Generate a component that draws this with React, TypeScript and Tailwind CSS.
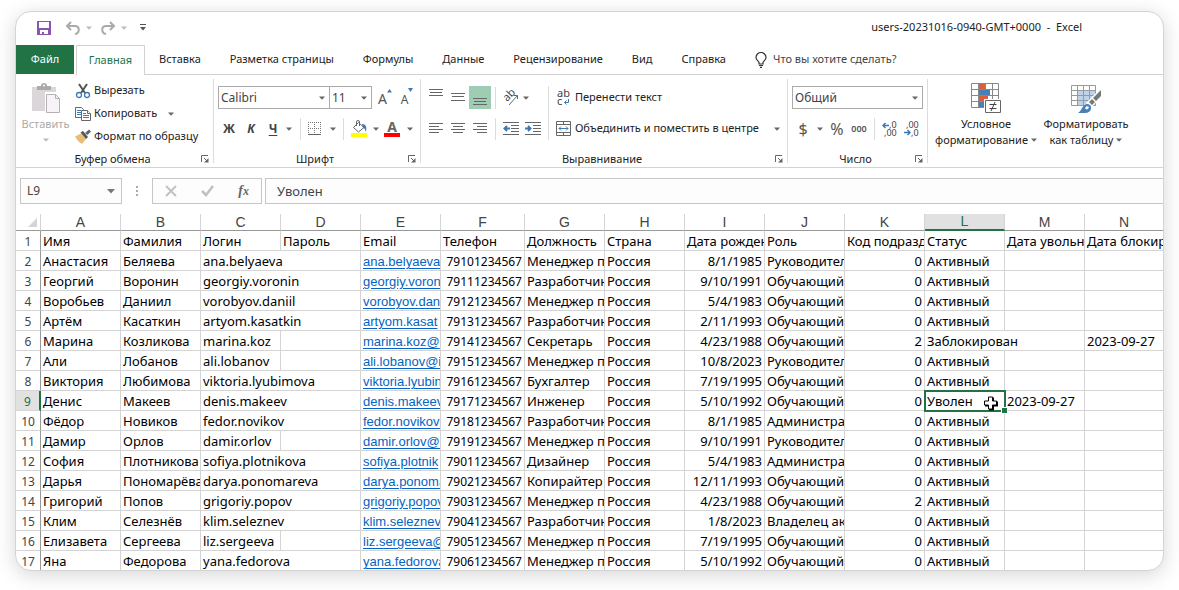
import { Fragment, type ReactNode } from "react";

const tabs = ["Вставка", "Разметка страницы", "Формулы", "Данные", "Рецензирование", "Вид", "Справка"];

const columns = ["A", "B", "C", "D", "E", "F", "G", "H", "I", "J", "K", "L", "M", "N"];

const headings = [
  "Имя", "Фамилия", "Логин", "Пароль", "Email", "Телефон", "Должность", "Страна",
  "Дата рожден", "Роль", "Код подразд", "Статус", "Дата увольн", "Дата блокир",
];

type User = {
  first: string;
  last: string;
  login: string;
  spill?: boolean;
  email: string;
  phone: string;
  job: string;
  born: string;
  role: string;
  unit: string;
  status: string;
  dismissed?: string;
  blocked?: string;
};

const manager = "Менеджер п";
const developer = "Разработчик";
const student = "Обучающий";
const head = "Руководител";
const admin = "Администра";

const users: User[] = [
  { first: "Анастасия", last: "Беляева", login: "ana.belyaeva", spill: true, email: "ana.belyaeva@", phone: "79101234567", job: manager, born: "8/1/1985", role: head, unit: "0", status: "Активный" },
  { first: "Георгий", last: "Воронин", login: "georgiy.voronin", spill: true, email: "georgiy.voroni", phone: "79111234567", job: developer, born: "9/10/1991", role: student, unit: "0", status: "Активный" },
  { first: "Воробьев", last: "Даниил", login: "vorobyov.daniil", spill: true, email: "vorobyov.dani", phone: "79121234567", job: manager, born: "5/4/1983", role: student, unit: "0", status: "Активный" },
  { first: "Артём", last: "Касаткин", login: "artyom.kasatkin", spill: true, email: "artyom.kasat", phone: "79131234567", job: developer, born: "2/11/1993", role: student, unit: "0", status: "Активный" },
  { first: "Марина", last: "Козликова", login: "marina.koz", email: "marina.koz@", phone: "79141234567", job: "Секретарь", born: "4/23/1988", role: student, unit: "2", status: "Заблокирован", blocked: "2023-09-27" },
  { first: "Али", last: "Лобанов", login: "ali.lobanov", email: "ali.lobanov@i", phone: "79151234567", job: manager, born: "10/8/2023", role: head, unit: "0", status: "Активный" },
  { first: "Виктория", last: "Любимова", login: "viktoria.lyubimova", spill: true, email: "viktoria.lyubin", phone: "79161234567", job: "Бухгалтер", born: "7/19/1995", role: student, unit: "0", status: "Активный" },
  { first: "Денис", last: "Макеев", login: "denis.makeev", spill: true, email: "denis.makeev", phone: "79171234567", job: "Инженер", born: "5/10/1992", role: student, unit: "0", status: "Уволен", dismissed: "2023-09-27" },
  { first: "Фёдор", last: "Новиков", login: "fedor.novikov", spill: true, email: "fedor.novikov@", phone: "79181234567", job: developer, born: "8/1/1985", role: admin, unit: "0", status: "Активный" },
  { first: "Дамир", last: "Орлов", login: "damir.orlov", email: "damir.orlov@i", phone: "79191234567", job: manager, born: "9/10/1991", role: head, unit: "0", status: "Активный" },
  { first: "София", last: "Плотникова", login: "sofiya.plotnikova", spill: true, email: "sofiya.plotnik", phone: "79011234567", job: "Дизайнер", born: "5/4/1983", role: admin, unit: "0", status: "Активный" },
  { first: "Дарья", last: "Пономарёва", login: "darya.ponomareva", spill: true, email: "darya.ponoma", phone: "79021234567", job: "Копирайтер", born: "12/11/1993", role: student, unit: "0", status: "Активный" },
  { first: "Григорий", last: "Попов", login: "grigoriy.popov", spill: true, email: "grigoriy.popov", phone: "79031234567", job: manager, born: "4/23/1988", role: student, unit: "2", status: "Активный" },
  { first: "Клим", last: "Селезнёв", login: "klim.seleznev", spill: true, email: "klim.seleznev", phone: "79041234567", job: developer, born: "1/8/2023", role: "Владелец ак", unit: "0", status: "Активный" },
  { first: "Елизавета", last: "Сергеева", login: "liz.sergeeva", email: "liz.sergeeva@", phone: "79051234567", job: manager, born: "7/19/1995", role: student, unit: "0", status: "Активный" },
  { first: "Яна", last: "Федорова", login: "yana.fedorova", spill: true, email: "yana.fedorova", phone: "79061234567", job: manager, born: "5/10/1992", role: student, unit: "0", status: "Активный" },
];

function Caret({ className = "text-[#666]" }: { className?: string }) {
  return (
    <svg className={`shrink-0 ${className}`} width="6" height="4" viewBox="0 0 6 4" fill="currentColor" aria-hidden="true">
      <path d="M0 .5h6L3 3.7z" />
    </svg>
  );
}

function Launcher({ label }: { label: string }) {
  return (
    <button type="button" aria-label={label} className="justify-self-end">
      <svg width="8" height="8" viewBox="0 0 8 8" fill="none" stroke="#666" aria-hidden="true">
        <path d="M.5 7V.5H7M3 3l3 3" />
        <path d="M7.500 3v4.500H3z" fill="#666" stroke="none" />
      </svg>
    </button>
  );
}

function Group({ title, className, children }: { title: string; className: string; children: ReactNode }) {
  return (
    <section aria-label={title} className={`flex shrink-0 flex-col border-r border-[#dcdcdc] ${className}`}>
      <div className="h-[72px] shrink-0">{children}</div>
      <div className="grid shrink-0 grid-cols-[12px_1fr_12px] items-center pr-1">
        <span />
        <h2 className="text-center leading-4">{title}</h2>
        <Launcher label={title} />
      </div>
    </section>
  );
}

function Tool({ label, className = "w-[22px]", children }: { label: string; className?: string; children: ReactNode }) {
  return (
    <button type="button" aria-label={label} className={`flex h-[23px] shrink-0 items-center justify-center ${className}`}>
      {children}
    </button>
  );
}

function Combo({ label, value, className }: { label: string; value: string; className: string }) {
  return (
    <div className={`relative flex h-[23px] items-center border border-[#ababab] bg-white ${className}`}>
      <select aria-label={label} defaultValue={value} className="h-full w-full appearance-none bg-transparent pl-[2px] text-xs text-[#444] outline-none">
        <option>{value}</option>
      </select>
      <Caret className="pointer-events-none absolute right-1 text-[#666]" />
    </div>
  );
}

function Lines({ rows }: { rows: [number, number, number][] }) {
  return (
    <svg width="14" height="23" viewBox="0 0 14 23" fill="#666" aria-hidden="true">
      {rows.map(([x, y, w]) => (
        <rect key={y} x={x} y={y} width={w} height="1" />
      ))}
    </svg>
  );
}

function Separator() {
  return <span className="h-[22px] w-px shrink-0 bg-[#dcdcdc]" />;
}

function PasteIcon() {
  return (
    <svg width="28" height="31" viewBox="0 0 28 31" aria-hidden="true">
      <path d="M0 4h24v24H0z" fill="#dbd6da" />
      <path d="M5 7V3h4a3 3 0 0 1 6 0h4v4z" fill="#aaa" />
      <circle cx="12" cy="2.500" r="1" fill="#fff" />
      <path d="M13 9h12l4 4v18H13z" fill="#fff" />
      <path d="M14.500 11.500h9l4 4v14h-13z" fill="#f7f3f8" stroke="#b5b1b5" />
      <path d="M23.500 11.500v4h4" fill="none" stroke="#b5b1b5" />
    </svg>
  );
}

function ScissorsIcon() {
  return (
    <svg width="16" height="16" viewBox="0 0 16 16" fill="none" aria-hidden="true">
      <path d="M4 1l6 9M12 1l-6 9" stroke="#555" strokeWidth="2" />
      <circle cx="4" cy="12" r="2.500" stroke="#3f79b5" strokeWidth="1.300" />
      <circle cx="12" cy="12" r="2.500" stroke="#3f79b5" strokeWidth="1.300" />
    </svg>
  );
}

function CopyIcon() {
  return (
    <svg width="16" height="16" viewBox="0 0 16 16" fill="#fff" aria-hidden="true">
      <path d="M.5 1.500h6l2 2v8h-8z" stroke="#666" />
      <path d="M2 4.500h4M2 6.500h4M2 8.500h4" stroke="#3f79b5" />
      <path d="M6.500 4.500h6l3 3v7h-9z" stroke="#666" />
      <path d="M12.500 4.500v3h3" stroke="#666" />
      <path d="M8 7.500h3M8 9.500h6M8 11.500h6" stroke="#3f79b5" />
    </svg>
  );
}

function BrushIcon() {
  return (
    <svg width="16" height="16" viewBox="0 0 16 16" aria-hidden="true">
      <path d="M0 7.500l6-3 5 5.500-4 5-4-3z" fill="#e8bd77" />
      <path d="M5.500 3.500L8 2l5 6-2 2z" fill="#555" />
      <path d="M10 4l4-3.500 2 2L12.500 6z" fill="#666" />
    </svg>
  );
}

function BordersIcon() {
  return (
    <svg width="14" height="14" viewBox="0 0 14 14" fill="none" stroke="#777" strokeDasharray="1 1" aria-hidden="true">
      <path d="M0 .5h13M0 6.500h13M.5 0v13M6.500 0v13M12.500 0v13" />
      <path d="M0 12.500h13" strokeDasharray="none" stroke="#666" />
    </svg>
  );
}

function FillIcon() {
  return (
    <svg width="16" height="17" viewBox="0 0 16 17" aria-hidden="true">
      <path d="M2.500 7.500l5-5 5.500 5-5.500 4.500z" fill="#fff" stroke="#666" />
      <path d="M5.500 6V2a1.500 1.500 0 0 1 3 0v4" fill="none" stroke="#666" />
      <path d="M11 4c4 0 5 3 4 8-1-2-1-4-3-4z" fill="#3f79b5" />
      <path d="M0 13h16v4H0z" fill="#ff0" />
    </svg>
  );
}

function FontColorIcon() {
  return (
    <span className="flex flex-col items-center">
      <span className="h-[13px] text-sm leading-[13px] font-bold text-[#666]">A</span>
      <span className="h-1 w-4 bg-[#f00]" />
    </span>
  );
}

function GrowFont({ down = false }: { down?: boolean }) {
  return (
    <span className="flex items-start">
      <span className={down ? "pt-1 text-xs leading-4 text-[#555]" : "pt-[2px] text-sm leading-4 text-[#555]"}>A</span>
      <svg width="5" height="4" viewBox="0 0 5 4" fill="#3f79b5" aria-hidden="true">
        <path d={down ? "M0 0h5L2.500 4z" : "M0 3.500h5L2.500 0z"} />
      </svg>
    </span>
  );
}

function OrientationIcon() {
  return (
    <svg width="17" height="16" viewBox="0 0 17 16" aria-hidden="true">
      <text x="0" y="0" transform="translate(5 12) rotate(-45)" fontSize="11" fill="#444">ab</text>
      <path d="M7 15l8-9M12 5.500h3.500V9" fill="none" stroke="#666" />
    </svg>
  );
}

function IndentIcon({ right = false }: { right?: boolean }) {
  return (
    <svg width="16" height="13" viewBox="0 0 16 13" fill="none" stroke="#666" aria-hidden="true">
      <path d="M0 .5h16M8 3.500h8M8 6.500h8M8 9.500h8M0 12.500h16" />
      <path d={right ? "M0 6.500h5M3 4l2.500 2.500L3 9" : "M2 6.500h5M4 4L1.500 6.500 4 9"} stroke="#3f79b5" strokeWidth="2" />
    </svg>
  );
}

function WrapIcon() {
  return (
    <svg width="16" height="18" viewBox="0 0 16 18" fontSize="11" fill="#444" aria-hidden="true">
      <text x="1" y="8">ab</text>
      <text x="1" y="16">c</text>
      <path d="M12.500 10v3.500H8.500M10.500 11.500l-2 2 2 2" fill="none" stroke="#3f79b5" />
    </svg>
  );
}

function MergeIcon() {
  return (
    <svg width="16" height="15" viewBox="0 0 16 15" fill="none" stroke="#666" aria-hidden="true">
      <path d="M.5.5h14v14H.5zM.5 3.500h14M.5 11.500h14M7.500 0v3M7.500 12v3" />
      <path d="M3 7.500h9M5 5.500l-2 2 2 2M10 5.500l2 2-2 2" stroke="#3f79b5" />
    </svg>
  );
}

function DecimalIcon({ less = false }: { less?: boolean }) {
  return (
    <svg width="16" height="16" viewBox="0 0 16 16" fontSize="9" fill="#444" aria-hidden="true">
      <text x={less ? 2 : 7} y="7">{less ? ",00" : ",0"}</text>
      <text x={less ? 7 : 2} y="15">{less ? ",0" : ",00"}</text>
      <path d={less ? "M0 11.500h6M3.500 9L6 11.500 3.500 14" : "M1 4.500h6M3.500 2L1 4.500 3.500 7"} fill="none" stroke="#3f79b5" strokeWidth="1.500" />
    </svg>
  );
}

function ConditionalIcon() {
  return (
    <svg width="30" height="30" viewBox="0 0 30 30" aria-hidden="true">
      <path d="M.5.500h27v24H.5z" fill="#fff" />
      <path d="M8 1h6v5H8z" fill="#d8603f" />
      <path d="M8 19h5v5H8z" fill="#4a80b8" />
      <path d="M.5.500h27v24H.5zM0 6.500h28M0 12.500h28M0 18.500h28M7.500 0v25M14.500 0v25M21.500 0v25" fill="none" stroke="#888" />
      <path d="M8 7h11v5H8z" fill="#4a80b8" />
      <path d="M8 13h9v5H8z" fill="#d8603f" />
      <path d="M13 16h17v14H13z" fill="#fff" />
      <path d="M14.500 17.500h15v12h-15z" fill="#fff" stroke="#666" />
      <path d="M18.500 21.500h7M18.500 25.500h7M24 19l-4 9" fill="none" stroke="#444" />
    </svg>
  );
}

function TableIcon() {
  return (
    <svg width="30" height="30" viewBox="0 0 30 30" aria-hidden="true">
      <path d="M.5 2.500h24v20H.5z" fill="#fff" />
      <path d="M6 8h19v15H6z" fill="#bdd3ea" />
      <path d="M.5 2.500h24v20H.5zM0 7.500h25M0 12.500h25M0 17.500h25M6.500 2v21M12.500 2v21M18.500 2v21" fill="none" stroke="#999" />
      <path d="M30 5v9L20 25l-5-5z" fill="#fff" />
      <path d="M30 7v6l-5 5-3-3zM21 16l3 3-3 3-3-3z" fill="#777" />
      <path d="M7 30c4-2 4-9 10-9 5 1 4 9-3 9z" fill="#4a80b8" />
      <path d="M14 25c1-2 3-2 4-1-1 3-3 3-4 1z" fill="#fff" />
    </svg>
  );
}

function TitleBar() {
  return (
    <header className="flex h-[33px] items-center pr-[81px] pb-[2px] pl-[21px]">
      <button type="button" aria-label="Сохранить" className="mr-[14px]">
        <svg width="14" height="14" viewBox="0 0 14 14" aria-hidden="true">
          <path d="M0 0h14v14H0z" fill="#8a56ac" />
          <path d="M2 1h10v6H2zM3 9h8v4H3z" fill="#fff" />
          <path d="M5 11h2v2H5z" fill="#8a56ac" />
        </svg>
      </button>
      <button type="button" aria-label="Отменить" className="flex items-center gap-[5px]">
        <svg width="16" height="14" viewBox="0 0 16 14" fill="none" stroke="#aaa" strokeWidth="2" aria-hidden="true">
          <path d="M6 1L2 5l4 4M2 5h8c5 0 5 7 0 8" />
        </svg>
        <Caret className="text-[#bbb]" />
      </button>
      <button type="button" aria-label="Повторить" className="ml-2 flex items-center gap-[5px]">
        <svg width="16" height="14" viewBox="0 0 16 14" fill="none" stroke="#aaa" strokeWidth="2" aria-hidden="true">
          <path d="M10 1l4 4-4 4M14 5H6c-5 0-5 7 0 8" />
        </svg>
        <Caret className="text-[#bbb]" />
      </button>
      <button type="button" aria-label="Настройка панели быстрого доступа" className="ml-[13px]">
        <svg width="6" height="7" viewBox="0 0 6 7" fill="#555" aria-hidden="true">
          <path d="M0 0h6v1H0zM0 3h6L3 6.500z" />
        </svg>
      </button>
      <h1 className="ml-auto whitespace-pre">users-20231016-0940-GMT+0000  -  Excel</h1>
    </header>
  );
}

function TabBar() {
  return (
    <nav className="flex h-[30px] items-stretch">
      <button type="button" className="mr-[2px] mb-px w-[58px] bg-[#217346] text-white">Файл</button>
      <button type="button" className="w-[69px] border border-b-0 border-[#d2d2d2] text-[#217346]">Главная</button>
      <div className="flex flex-1 items-center gap-[29px] border-b border-[#d2d2d2] pl-[14px]">
        {tabs.map((tab) => (
          <button key={tab} type="button" className="whitespace-nowrap">{tab}</button>
        ))}
        <button type="button" className="flex items-center gap-[6px] whitespace-nowrap text-[#444]">
          <svg width="12" height="16" viewBox="0 0 12 16" fill="none" stroke="#333" strokeWidth="1.200" aria-hidden="true">
            <path d="M4 12V10.500C3.500 9 1 8 1 5.500a5 5 0 0 1 10 0C11 8 8.500 9 8 10.500V12zM4 13.500h4M5 15.400h2" />
          </svg>
          Что вы хотите сделать?
        </button>
      </div>
    </nav>
  );
}

function Ribbon() {
  return (
    <div className="flex h-[93px] border-b border-[#d2d2d2] pt-1 pb-1">
      <Group title="Буфер обмена" className="w-[198px]">
        <div className="flex">
          <button type="button" className="flex w-[59px] flex-col items-center pt-1 text-[#aaa]">
            <PasteIcon />
            <span className="leading-5">Вставить</span>
            <Caret className="mt-1 text-[#bbb]" />
          </button>
          <div className="flex flex-col">
            <button type="button" className="flex h-[23px] items-center gap-[3px]">
              <ScissorsIcon />
              Вырезать
            </button>
            <button type="button" className="flex h-[23px] items-center gap-[3px]">
              <CopyIcon />
              <span className="pr-2">Копировать</span>
              <Caret />
            </button>
            <button type="button" className="flex h-[23px] items-center gap-[3px] whitespace-nowrap">
              <BrushIcon />
              Формат по образцу
            </button>
          </div>
        </div>
      </Group>

      <Group title="Шрифт" className="w-[207px]">
        <div className="flex flex-col gap-2 pt-[7px] pl-1">
          <div className="flex">
            <Combo label="Гарнитура" value="Calibri" className="w-[112px]" />
            <Combo label="Размер шрифта" value="11" className="w-[42px] border-l-0" />
            <Tool label="Увеличить размер шрифта" className="w-[26px]"><GrowFont /></Tool>
            <Tool label="Уменьшить размер шрифта" className="w-[18px]"><GrowFont down /></Tool>
          </div>
          <div className="flex items-center">
            <Tool label="Полужирный"><span className="text-xs font-bold text-[#444]">Ж</span></Tool>
            <Tool label="Курсив"><span className="text-xs font-bold text-[#444] italic">К</span></Tool>
            <Tool label="Подчёркнутый"><span className="text-xs font-bold text-[#444] underline underline-offset-2">Ч</span></Tool>
            <Tool label="Варианты подчёркивания" className="mr-[6px] w-[10px]"><Caret /></Tool>
            <Separator />
            <Tool label="Границы" className="w-7"><BordersIcon /></Tool>
            <Tool label="Варианты границ" className="mr-[6px] w-2"><Caret /></Tool>
            <Separator />
            <Tool label="Цвет заливки" className="w-[30px]"><FillIcon /></Tool>
            <Tool label="Варианты заливки" className="w-1"><Caret /></Tool>
            <Tool label="Цвет текста" className="w-7"><FontColorIcon /></Tool>
            <Tool label="Варианты цвета текста" className="w-2"><Caret /></Tool>
          </div>
        </div>
      </Group>

      <Group title="Выравнивание" className="w-[367px]">
        <div className="flex pt-[7px] pl-1">
          <div className="flex flex-col gap-2">
            <div className="flex items-center">
              <Tool label="По верхнему краю"><Lines rows={[[0, 3, 14], [1, 6, 12], [0, 9, 14]]} /></Tool>
              <Tool label="По середине"><Lines rows={[[0, 7, 14], [1, 10, 12], [0, 14, 14]]} /></Tool>
              <Tool label="По нижнему краю" className="w-[22px] bg-[#9fcdb3]"><Lines rows={[[0, 12, 14], [1, 15, 12], [0, 18, 14]]} /></Tool>
              <span className="w-1" />
              <Separator />
              <Tool label="Ориентация" className="ml-[2px] w-[34px] gap-1"><OrientationIcon /><Caret /></Tool>
            </div>
            <div className="flex items-center">
              <Tool label="По левому краю"><Lines rows={[[0, 6, 14], [0, 9, 10], [0, 12, 14], [0, 15, 10]]} /></Tool>
              <Tool label="По центру"><Lines rows={[[0, 6, 14], [2, 9, 10], [0, 12, 14], [2, 15, 10]]} /></Tool>
              <Tool label="По правому краю"><Lines rows={[[0, 6, 14], [4, 9, 10], [0, 12, 14], [4, 15, 10]]} /></Tool>
              <span className="w-1" />
              <Separator />
              <Tool label="Уменьшить отступ" className="ml-1 w-[22px]"><IndentIcon /></Tool>
              <Tool label="Увеличить отступ"><IndentIcon right /></Tool>
            </div>
          </div>
          <div className="ml-1 flex flex-col gap-2 border-l border-[#dcdcdc] pl-[7px]">
            <button type="button" className="flex h-[23px] items-center gap-[3px] whitespace-nowrap"><WrapIcon />Перенести текст</button>
            <button type="button" className="flex h-[23px] items-center gap-[3px] whitespace-nowrap">
              <MergeIcon />
              <span className="pr-3">Объединить и поместить в центре</span>
              <Caret />
            </button>
          </div>
        </div>
      </Group>

      <Group title="Число" className="w-[140px]">
        <div className="flex flex-col gap-2 pt-[7px] pr-1 pl-1">
          <Combo label="Числовой формат" value="Общий" className="w-full" />
          <div className="flex items-center">
            <Tool label="Финансовый формат"><span className="text-base text-[#555]">$</span></Tool>
            <Tool label="Варианты валюты" className="w-3"><Caret /></Tool>
            <Tool label="Процентный формат"><span className="text-base text-[#555]">%</span></Tool>
            <Tool label="Формат с разделителями" className="mr-1 w-[22px]"><span className="text-[9px] font-semibold text-[#555]">000</span></Tool>
            <Separator />
            <Tool label="Увеличить разрядность" className="ml-1 w-[22px]"><DecimalIcon /></Tool>
            <Tool label="Уменьшить разрядность"><DecimalIcon less /></Tool>
          </div>
        </div>
      </Group>

      <div className="flex items-start pt-1 pl-1 leading-4">
        <button type="button" className="flex w-[108px] flex-col items-center whitespace-nowrap">
          <ConditionalIcon />
          <span className="pt-[3px]">Условное</span>
          <span className="flex items-center gap-[3px]">форматирование<Caret /></span>
        </button>
        <button type="button" className="flex w-[92px] flex-col items-center whitespace-nowrap">
          <TableIcon />
          <span className="pt-[3px]">Форматировать</span>
          <span className="flex items-center gap-[3px]">как таблицу<Caret /></span>
        </button>
      </div>
    </div>
  );
}

function FormulaBar() {
  return (
    <div className="flex h-[46px] items-start pt-[10px] pl-1">
      <div className="relative flex h-[26px] w-[102px] items-center border border-[#c6c6c6] bg-[#fdfdfd]">
        <input aria-label="Имя ячейки" defaultValue="L9" className="w-full bg-transparent pl-[6px] text-xs text-[#444] outline-none" />
        <svg className="absolute right-[6px]" width="8" height="5" viewBox="0 0 8 5" fill="#777" aria-hidden="true"><path d="M0 0h8L4 4.500z" /></svg>
      </div>
      <svg className="mx-[13px] h-[26px] shrink-0" width="4" height="26" viewBox="0 0 4 26" fill="#aaa" aria-hidden="true">
        <path d="M1 8h2v2H1zM1 12h2v2H1zM1 16h2v2H1z" />
      </svg>
      <div className="flex h-[26px] w-[110px] items-center justify-around border border-[#c6c6c6] bg-[#fdfdfd]">
        <button type="button" aria-label="Отмена">
          <svg width="12" height="12" viewBox="0 0 12 12" stroke="#c0c0c0" strokeWidth="1.800" aria-hidden="true"><path d="M1 1l10 10M11 1L1 11" /></svg>
        </button>
        <button type="button" aria-label="Ввод">
          <svg width="13" height="12" viewBox="0 0 13 12" fill="none" stroke="#c0c0c0" strokeWidth="2.500" aria-hidden="true"><path d="M1 6l4 4 7-9" /></svg>
        </button>
        <button type="button" aria-label="Вставить функцию" className="font-['Liberation_Serif',serif] text-sm leading-5 font-bold text-[#666] italic">
          f<span className="text-xs">x</span>
        </button>
      </div>
      <input aria-label="Строка формул" defaultValue="Уволен" className="ml-[3px] h-[26px] min-w-0 flex-1 border border-r-0 border-[#c6c6c6] bg-[#fdfdfd] pl-[11px] text-[13px] text-[#444] outline-none" />
    </div>
  );
}

const cell = "h-5 overflow-hidden border-r border-b border-[#d4d4d4] p-0 px-[2px] pt-[2px] whitespace-nowrap";

function RowHeader({ n }: { n: number }) {
  return (
    <th
      scope="row"
      className={
        n === 9
          ? "h-5 border-r-2 border-b border-r-[#217346] border-b-[#d4d4d4] bg-[#e1e1e1] p-0 pt-[2px] text-center text-xs leading-[17px] font-normal text-[#217346]"
          : "h-5 border-r border-b border-r-[#999] border-b-[#d4d4d4] p-0 pt-[2px] text-center text-xs leading-[17px] font-normal text-[#444]"
      }
    >
      {n}
    </th>
  );
}

function SelectedCell({ value }: { value: string }) {
  return (
    <td className="relative h-5 border-r border-b border-[#d4d4d4] p-0 px-[2px] pt-[2px] whitespace-nowrap">
      {value}
      <span className="pointer-events-none absolute -top-px -right-[2px] -bottom-[2px] -left-px border-2 border-[#217346]" />
      <span className="absolute -right-1 -bottom-1 size-[7px] border border-white bg-[#217346]" />
      <svg className="absolute top-[5px] right-[5px]" width="16" height="16" viewBox="0 0 16 16" aria-hidden="true">
        <path d="M6 1.500h5v4h4v5h-4v4H6v-4H2v-5h4z" fill="#000" />
        <path d="M5.500 1h4v4h4v4h-4v4h-4V9h-4V5h4z" fill="#fff" stroke="#000" />
      </svg>
    </td>
  );
}

function Sheet() {
  return (
    <table className="-mb-px w-[calc(100%+1px)] table-fixed border-separate border-spacing-0 text-[13px] leading-[17px] text-black">
      <colgroup>
        <col className="w-[25px]" />
        {columns.map((c, i) => (
          <col key={c} className={c === "F" ? "w-[84px]" : i === columns.length - 1 ? "" : "w-20"} />
        ))}
      </colgroup>
      <thead>
        <tr>
          <td className="h-[17px] border-r border-b border-r-[#d4d4d4] border-b-[#999] p-0">
            <svg className="mr-[3px] ml-auto" width="9" height="9" viewBox="0 0 9 9" fill="#d4d4d4" aria-hidden="true"><path d="M9 0v9H0z" /></svg>
          </td>
          {columns.map((c) => (
            <th
              key={c}
              scope="col"
              className={
                c === "L"
                  ? "h-[17px] border-r border-b-2 border-r-[#d4d4d4] border-b-[#217346] bg-[#e1e1e1] p-0 font-['Liberation_Sans',sans-serif] text-sm leading-[15px] font-normal text-[#217346]"
                  : "h-[17px] border-r border-b border-r-[#d4d4d4] border-b-[#999] p-0 font-['Liberation_Sans',sans-serif] text-sm leading-4 font-normal text-[#444]"
              }
            >
              {c}
            </th>
          ))}
        </tr>
      </thead>
      <tbody>
        <tr>
          <RowHeader n={1} />
          {headings.map((h) => (
            <td key={h} className={cell}>{h}</td>
          ))}
        </tr>
        {users.map((u, i) => (
          <tr key={u.login}>
            <RowHeader n={i + 2} />
            <td className={cell}>{u.first}</td>
            <td className={cell}>{u.last}</td>
            <td className={cell} colSpan={u.spill ? 2 : 1}>{u.login}</td>
            {!u.spill && <td className={cell} />}
            <td className={cell}>
              <a href={`mailto:${u.login}`} className="block font-['Liberation_Sans',sans-serif] text-[#0563c1] underline underline-offset-2">{u.email}</a>
            </td>
            <td className={`${cell} text-right text-xs leading-[17px]`}>{u.phone}</td>
            <td className={cell}>{u.job}</td>
            <td className={cell}>Россия</td>
            <td className={`${cell} text-right`}>{u.born}</td>
            <td className={cell}>{u.role}</td>
            <td className={`${cell} text-right`}>{u.unit}</td>
            {u.blocked ? (
              <td className={cell} colSpan={2}>{u.status}</td>
            ) : (
              <Fragment>
                {u.dismissed ? <SelectedCell value={u.status} /> : <td className={cell}>{u.status}</td>}
                <td className={cell}>{u.dismissed}</td>
              </Fragment>
            )}
            <td className={cell}>{u.blocked}</td>
          </tr>
        ))}
      </tbody>
    </table>
  );
}

export default function App() {
  return (
    <main className="px-[15px] pt-[11px] pb-[19px] font-['Noto_Sans',sans-serif] text-[11px] text-[#222]">
      <div className="overflow-hidden rounded-2xl border border-[#d4d4d4] bg-white shadow-[0_4px_20px_rgba(0,0,0,0.16)]">
        <TitleBar />
        <TabBar />
        <Ribbon />
        <FormulaBar />
        <Sheet />
      </div>
    </main>
  );
}
